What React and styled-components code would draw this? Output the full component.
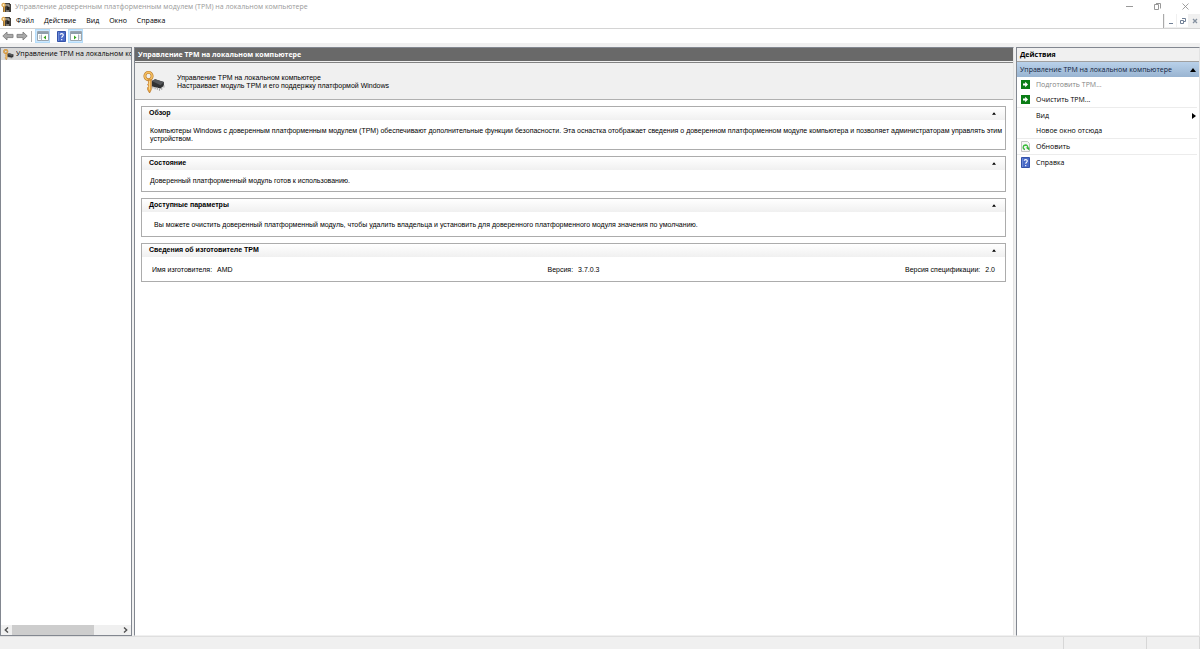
import React,{ useState } from 'react';
import styled,{ createGlobalStyle } from "styled-components"

const GlobalStyle = createGlobalStyle`
* { box-sizing: border-box; }
body {
margin: 0;
background: #fff;
color: #000;
font-family: "Open Sans", "Noto Sans", sans-serif;
font-size: 7px;
line-height: 10px;
}
h1, h2, h3, p, ul, dl, dd { margin: 0; padding: 0; font-size: inherit; }
button {
border: 0;
padding: 0;
margin: 0;
background: none;
color: inherit;
font: inherit;
text-align: left;
}
svg { display: block; flex: none; }
`

const Window = styled.div`
display: flex;
flex-direction: column;
height: 100vh;
`

const Bar = styled.header`
display: flex;
align-items: center;
height: 14px;
flex: none;
padding-left: 1px;
`

const Title = styled.h1`
flex: 1;
padding-left: 4px;
font-weight: 400;
color: #999;
white-space: nowrap;
`

const CaptionButtons = styled.div`
display: flex;
align-self: flex-start;
padding-right: 1px;
button {
display: flex;
justify-content: center;
align-items: center;
width: 28px;
height: 13px;
}
`

const MenuBar = styled(Bar).attrs({ as: "nav" })`
height: 15px;
align-items: stretch;
border-bottom: 1px solid #d4d4d4;
> svg { align-self: center; }
`

const Menus = styled.div`
display: flex;
flex: 1;
padding-left: 5px;
gap: 10px;
`

const MdiButtons = styled.div`
display: flex;
gap: 1px;
padding-left: 1px;
background: #f0f0f0;
border-left: 1px solid #aaa;
button {
display: flex;
justify-content: center;
align-items: center;
width: 11px;
height: 13px;
background: #fff;
}
button:last-child { background: #f0f0f0; }
`

const ToolBar = styled.div`
display: flex;
align-items: center;
flex: none;
height: 14px;
padding-left: 1px;
`

const ToolGroup = styled.div`
display: flex;
align-items: center;
& + & { margin-left: 4px; }
`

const Tool = styled.button`
display: flex;
align-items: center;
justify-content: center;
width: ${p => p.$on ? 15 : 14}px;
height: 14px;
background: ${p => p.$on ? "#cce8ff" : "none"};
border: 1px solid ${p => p.$on ? "#b4dcfa" : "transparent"};
`

const Divider = styled.span`
width: 1px;
height: 11px;
margin: 0 3px 0 2px;
background: #b0b0b0;
`

const Body = styled.main`
display: grid;
grid-template-columns: 132px minmax(0, 1fr) 184px;
gap: 2px;
flex: 1;
min-height: 0;
padding-top: 4px;
background: #f0f0f0;
`

const Pane = styled.section`
display: flex;
flex-direction: column;
min-width: 0;
background: #fff;
border: 1px solid #828790;
border-right-color: ${p => p.$edge ? "#828790" : "#e3e3e3"};
border-bottom-color: ${p => p.$edge ? "#828790" : "#f0f0f0"};
`

const TreeItem = styled.button`
display: flex;
align-items: center;
gap: 2px;
height: 12px;
padding-left: 2px;
background: #d9d9d9;
white-space: nowrap;
span { flex: 1; min-width: 0; overflow: hidden; }
`

const ScrollBar = styled.div`
display: flex;
align-items: stretch;
height: 10px;
margin-top: auto;
background: #f0f0f0;
button {
display: flex;
align-items: center;
justify-content: center;
width: 11px;
}
`

const Track = styled.div`
flex: 1;
`

const Thumb = styled.div`
width: 76%;
height: 10px;
background: #cdcdcd;
`

const PaneTitle = styled.h2`
height: 14px;
line-height: 14px;
padding-left: 3px;
background: #696969;
border-bottom: 1px solid #f0f0f0;
color: #fff;
font-weight: 700;
`

const Intro = styled.div`
display: flex;
align-items: center;
gap: 12px;
height: 38px;
padding: 1px 0 0 8px;
background: #f0f0f0;
border-top: 1px solid #828282;
border-bottom: 1px solid #b0b0b0;
font-family: "Liberation Sans", sans-serif;
line-height: 8px;
`

const Cards = styled.div`
display: flex;
flex-direction: column;
gap: 6px;
padding: 6px 7px 6px 6px;
font-family: "Liberation Sans", sans-serif;
line-height: 8px;
`

const Card = styled.section`
border: 1px solid #acacac;
`

const CardHead = styled.button`
display: flex;
justify-content: space-between;
align-items: center;
width: 100%;
height: 13px;
padding: 0 9px 1px 7px;
background: linear-gradient(#fff, #f0f0f0);
font-weight: 700;
`

const CardBody = styled.div`
padding: ${p => p.$roomy ? "9px 2px 7px 12px" : "7px 2px 6px 8px"};
`

const Facts = styled.dl`
display: grid;
grid-template-columns: 1fr auto 1fr;
padding: 9px 10px 7px;
div { display: flex; gap: 5px; }
div:last-child { justify-content: flex-end; }
`

const ActionsTitle = styled(PaneTitle)`
background: #f0f0f0;
border-bottom-color: #a0a0a0;
color: #000;
`

const GroupHead = styled.button`
display: flex;
justify-content: space-between;
align-items: center;
height: 15px;
padding: 0 3px;
background: linear-gradient(#b9d1ea, #99b4d1);
color: #10213a;
white-space: nowrap;
`

const ActionList = styled.ul`
list-style: none;
padding-right: 2px;
li.split { border-top: 1px solid #ececec; }
`

const Action = styled.button`
display: flex;
align-items: center;
gap: 6px;
width: 100%;
height: 15px;
padding: 0 1px 0 3px;
&:disabled { color: #838383; }
> span { flex: 1; }
`

const IconSlot = styled.i`
display: flex;
justify-content: center;
width: 10px;
`

const StatusBar = styled.footer`
display: flex;
justify-content: flex-end;
flex: none;
height: 13px;
background: #f0f0f0;
border-top: 1px solid #dfdfdf;
span { border-right: 1px solid #d7d7d7; }
span:nth-child(1) { flex: 1; }
span:nth-child(2) { width: 83px; }
span:nth-child(3) { width: 53px; }
`

const SnapIcon = () => <svg width="10" height="11" viewBox="0 0 10 11">
    <path d="M3 1h6v1h1v8H2V5h1z" fill="#45413c" />
    <path d="M4 2h4v2H4z" fill="#8b8780" />
    <path d="M6 5h2v3H6z" fill="#24211e" />
    <circle cx="2.600" cy="3" r="1.600" fill="#fff0c8" stroke="#dda64f" strokeWidth="1.300" />
    <path d="M3.200 5v5" stroke="#e0a545" strokeWidth="1.500" />
    <path d="M7 4h2M5 9h3" stroke="#b5b0a6" />
</svg>

const KeyIcon = ({ size }) => <svg width={size} height={size} viewBox="0 0 20 20">
    <path d="M8 9l3-1.500 8 2.500v3.500l-3 2.500-8-2z" fill="#303133" />
    <path d="M8 9l3-1.500 8 2.500-3 3z" fill="#55575a" />
    <path d="M9 14v2M11 14.500v2M13 15v2M15 16v2M17 15v2M19 13v2" stroke="#a2a2a2" />
    <circle cx="5" cy="4.600" r="3.300" fill="none" stroke="#b9792b" strokeWidth="2.600" />
    <circle cx="5" cy="4.600" r="3.300" fill="none" stroke="#f5c061" strokeWidth="1.500" />
    <path d="M4.500 8h3v9l-1.500 3-1.800-3v-2l1-1-1-2 1-1z" fill="#eaab48" stroke="#b66e20" strokeWidth=".6" />
    <path d="M6 9v8" stroke="#ffe09a" strokeWidth=".8" />
</svg>

const Arrow = ({ back }) => <svg width="12" height="10" viewBox="0 0 12 10">
    <path transform={back ? undefined : "translate(12 0) scale(-1 1)"} d="M.8 5L5 1v2.400h6v3.200H5V9z" fill="#a8a8a8" stroke="#808080" strokeWidth=".9" />
</svg>

const PanelIcon = ({ right }) => <svg width="12" height="10" viewBox="0 0 12 10">
    <path d="M.5.5h11v9H.5z" fill="#fff" stroke="#9ba5ad" />
    <path d="M1 2h10" stroke="#8f9eab" strokeWidth="2" />
    <path d={right ? "M8.500 3.500v6" : "M4.500 3.500v6"} stroke="#a8b1b8" />
    <path d={right ? "M4 4.500v4L6.500 6.500z" : "M9 4.500v4L6.500 6.500z"} fill="#36a51f" />
    <path d={right ? "M9.500 5h1M9.500 7h1" : "M2 5h1.500M2 7h1.500"} stroke="#9ca7af" />
</svg>

const HelpIcon = () => <svg width="9" height="11" viewBox="0 0 9 11">
    <path d="M.5.5h8v10h-8z" fill="#4a6bc8" stroke="#3452a8" />
    <path d="M1 1h1v9H1z" fill="#6d8bd6" />
    <path d="M3.200 3.800C3.200 2.400 6.300 2.100 6.300 4 6.300 5.300 4.700 5.200 4.700 6.800M4.700 8v1.200" fill="none" stroke="#fff" strokeWidth="1.100" />
</svg>

const GoIcon = () => <svg width="9" height="9" viewBox="0 0 9 9">
    <path d="M0 0h9v9H0z" fill="#0b7d16" />
    <path d="M2 3.500h2.200V1.700L7 4.500 4.200 7.300V5.500H2z" fill="#fff" />
</svg>

const RefreshIcon = () => <svg width="9" height="11" viewBox="0 0 9 11">
    <path d="M.5.5h6l2 2v8h-8z" fill="#f6f6f6" stroke="#c4c4c4" />
    <path d="M4 8.500C1.400 8 1.600 4.200 4.400 4c1.800 0 2.600 1.200 2.400 3" fill="none" stroke="#3bbb3c" strokeWidth="1.300" />
    <path d="M4.600 6.500h3.700v3z" fill="#2fae33" />
</svg>

const Chevron = ({ left }) => <svg width="5" height="6" viewBox="0 0 5 6">
    <path d={left ? "M4 .5L1.300 3 4 5.500" : "M1 .5L3.700 3 1 5.500"} fill="none" stroke="#505050" strokeWidth="1.400" />
</svg>

const Up = ({ small }) => <svg width={small ? 4 : 6} height={small ? 3 : 4} viewBox="0 0 6 4">
    <path d="M3 0l3 4H0z" fill="#000" />
</svg>

const menus = ["Файл", "Действие", "Вид", "Окно", "Справка"]

const actions = [
    { text: "Подготовить ТРМ...", icon: <GoIcon />, disabled: true },
    { text: "Очистить ТРМ...", icon: <GoIcon /> },
    { text: "Вид", split: true, submenu: true },
    { text: "Новое окно отсюда" },
    { text: "Обновить", icon: <RefreshIcon />, split: true },
    { text: "Справка", icon: <HelpIcon />, split: true },
]

const facts = [
    ["Имя изготовителя:", "AMD"],
    ["Версия:", "3.7.0.3"],
    ["Версия спецификации:", "2.0"],
]

function Section({ title, children }) {
    const [open,setOpen] = useState(true)
    return <Card>
        <h3>
            <CardHead aria-expanded={open} onClick={() => setOpen(!open)}>{title}<Up small /></CardHead>
        </h3>
        {open && children}
    </Card>
}

export default function App() {
    const [actionsOpen,setActionsOpen] = useState(true)

    return <Window>
        <GlobalStyle />
        <Bar>
            <SnapIcon />
            <Title>Управление доверенным платформенным модулем (ТРМ) на локальном компьютере</Title>
            <CaptionButtons>
                <button aria-label="Свернуть"><svg width="7" height="7"><path d="M0 3.500h7" stroke="#999" /></svg></button>
                <button aria-label="Восстановить"><svg width="7" height="7"><path d="M.5 1.500h4v5h-4zM2 .5h4.500v5" fill="none" stroke="#999" /></svg></button>
                <button aria-label="Закрыть"><svg width="7" height="7"><path d="M.5.5l6 6M6.500.5l-6 6" stroke="#888" strokeWidth=".8" /></svg></button>
            </CaptionButtons>
        </Bar>
        <MenuBar>
            <SnapIcon />
            <Menus>{menus.map(m => <button key={m}>{m}</button>)}</Menus>
            <MdiButtons>
                <button aria-label="Свернуть окно"><svg width="6" height="6"><path d="M1 5.500h4" stroke="#718096" /></svg></button>
                <button aria-label="Восстановить окно"><svg width="6" height="6"><path d="M.5 2.500h3v3h-3zM2 .5h3.500v3H4" fill="none" stroke="#718096" /></svg></button>
                <button aria-label="Закрыть окно"><svg width="6" height="6"><path d="M1 1l4 4M5 1L1 5" stroke="#8591a0" strokeWidth="1.300" /></svg></button>
            </MdiButtons>
        </MenuBar>
        <ToolBar>
            <ToolGroup>
                <Tool aria-label="Назад"><Arrow back /></Tool>
                <Tool aria-label="Вперед"><Arrow /></Tool>
                <Divider />
                <Tool $on aria-label="Дерево консоли"><PanelIcon /></Tool>
            </ToolGroup>
            <ToolGroup>
                <Tool aria-label="Справка"><HelpIcon /></Tool>
                <Tool $on aria-label="Панель действий"><PanelIcon right /></Tool>
            </ToolGroup>
        </ToolBar>
        <Body>
            <Pane $edge>
                <TreeItem><KeyIcon size={11} /><span>Управление ТРМ на локальном компьютере</span></TreeItem>
                <ScrollBar>
                    <button aria-label="Влево"><Chevron left /></button>
                    <Track><Thumb /></Track>
                    <button aria-label="Вправо"><Chevron /></button>
                </ScrollBar>
            </Pane>
            <Pane>
                <PaneTitle>Управление ТРМ на локальном компьютере</PaneTitle>
                <Intro>
                    <KeyIcon size={22} />
                    <div>
                        <p>Управление ТРМ на локальном компьютере</p>
                        <p>Настраивает модуль ТРМ и его поддержку платформой Windows</p>
                    </div>
                </Intro>
                <Cards>
                    <Section title="Обзор">
                        <CardBody>Компьютеры Windows с доверенным платформенным модулем (ТРМ) обеспечивают дополнительные функции безопасности. Эта оснастка отображает сведения о доверенном платформенном модуле компьютера и позволяет администраторам управлять этим устройством.</CardBody>
                    </Section>
                    <Section title="Состояние">
                        <CardBody>Доверенный платформенный модуль готов к использованию.</CardBody>
                    </Section>
                    <Section title="Доступные параметры">
                        <CardBody $roomy>Вы можете очистить доверенный платформенный модуль, чтобы удалить владельца и установить для доверенного платформенного модуля значения по умолчанию.</CardBody>
                    </Section>
                    <Section title="Сведения об изготовителе ТРМ">
                        <Facts>
                            {facts.map(([name,value]) => <div key={name}><dt>{name}</dt><dd>{value}</dd></div>)}
                        </Facts>
                    </Section>
                </Cards>
            </Pane>
            <Pane>
                <ActionsTitle>Действия</ActionsTitle>
                <GroupHead aria-expanded={actionsOpen} onClick={() => setActionsOpen(!actionsOpen)}>
                    Управление ТРМ на локальном компьютере<Up />
                </GroupHead>
                {actionsOpen && <ActionList>
                    {actions.map(a => <li key={a.text} className={a.split ? "split" : undefined}>
                        <Action disabled={a.disabled}>
                            <IconSlot>{a.icon}</IconSlot>
                            <span>{a.text}</span>
                            {a.submenu && <svg width="4" height="6"><path d="M0 0l4 3-4 3z" /></svg>}
                        </Action>
                    </li>)}
                </ActionList>}
            </Pane>
        </Body>
        <StatusBar><span /><span /><span /></StatusBar>
    </Window>
};
